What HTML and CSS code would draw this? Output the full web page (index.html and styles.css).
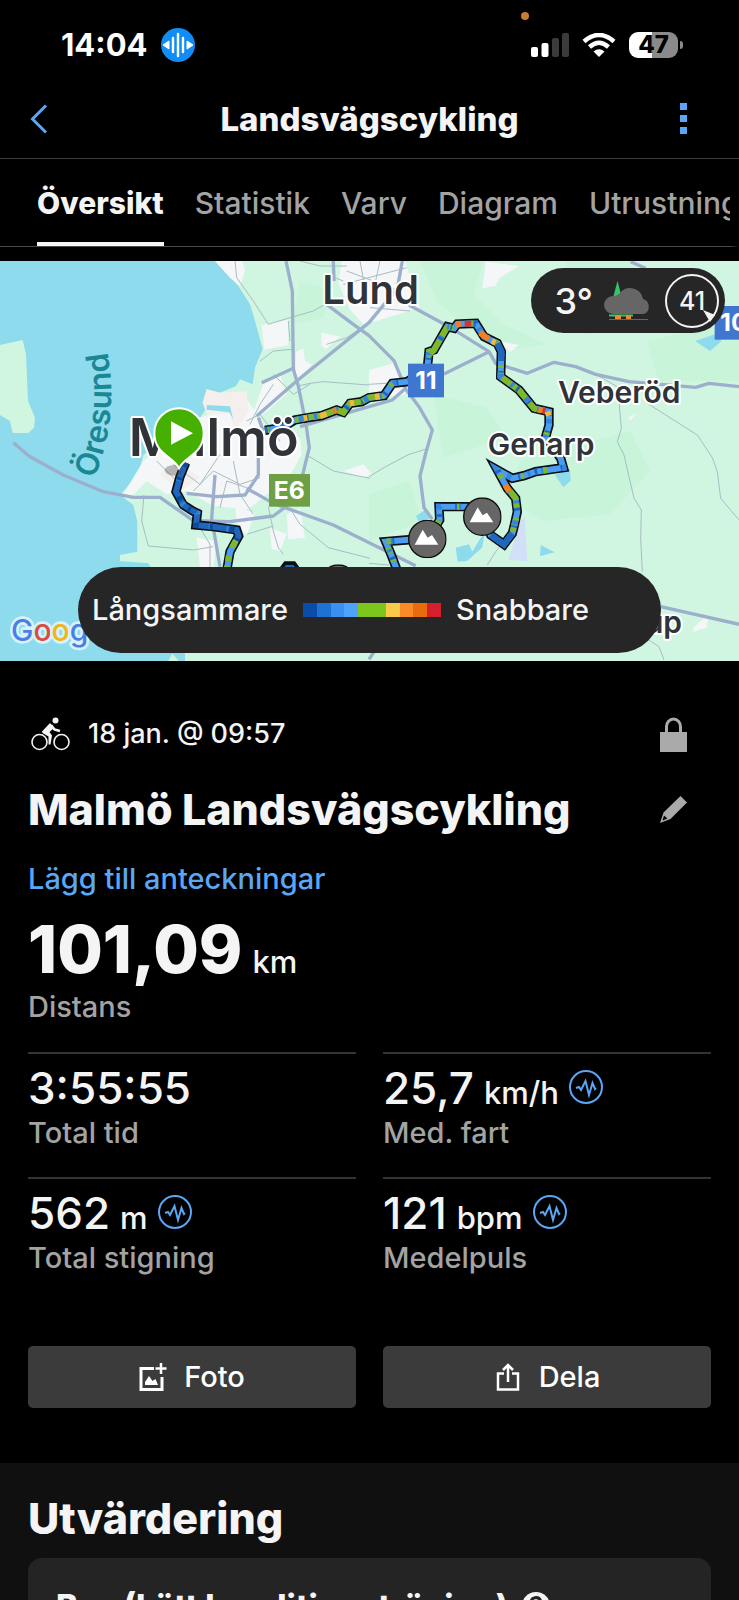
FILE: index.html
```html
<!DOCTYPE html>
<html lang="sv">
<head>
<meta charset="utf-8">
<meta name="viewport" content="width=device-width, initial-scale=1">
<title>Landsvägscykling</title>
<link rel="stylesheet" href="styles.css">
</head>
<body>
<svg class="defs" width="0" height="0" aria-hidden="true">
  <symbol id="pulse" viewBox="0 0 34 34">
    <circle cx="17" cy="17" r="16" fill="none" stroke="currentColor" stroke-width="2"/>
    <path d="M7 18l3-1 2 3 4.500-9 3.500 14 3.500-12 2.500 6 1-1" fill="none" stroke="currentColor" stroke-width="2"/>
  </symbol>
  <symbol id="peak" viewBox="0 0 116 116">
    <circle cx="58" cy="58" r="56" fill="#666" stroke="#0c0c0c" stroke-width="4"/>
    <path d="M20 75L44 30l15 24 13-8 19 29z" fill="#fff"/>
  </symbol>
</svg>
<div class="app">
  <header class="status">
    <span class="mic-dot"></span>
    <div class="status-side">
      <span class="clock">14:04</span>
      <svg class="voice" viewBox="0 0 34 34" aria-hidden="true">
        <circle cx="17" cy="17" r="17" fill="#128cf5"/>
        <path d="M2 17l6-4v8zM32 17l-6-4v8z" fill="#fff" stroke="#fff" stroke-linejoin="round"/>
        <path d="M12 10v14M17 6v22M22 10v14" stroke="#fff" stroke-width="2.400" stroke-linecap="round"/>
      </svg>
    </div>
    <div class="status-side">
      <svg class="signal" viewBox="0 0 38 24" aria-hidden="true">
        <rect x="0" y="14" width="7" height="10" rx="2" fill="#fff"/><rect x="10.500" y="10" width="7" height="14" rx="2" fill="#fff"/>
        <rect x="21" y="5" width="7" height="19" rx="2" fill="#3b3b3b"/><rect x="31" y="0" width="7" height="24" rx="2" fill="#3b3b3b"/>
      </svg>
      <svg class="wifi" viewBox="0 0 34 24" aria-hidden="true">
        <path d="M2 8.500Q17-4.500 32 8.500M7.500 14Q17 5.500 26.500 14" fill="none" stroke="#fff" stroke-width="4.500"/>
        <path d="M11.500 18.500Q17 14 22.500 18.500L17 24z" fill="#fff"/>
      </svg>
      <div class="battery">47</div>
    </div>
  </header>

  <nav class="titlebar">
    <button class="icon-btn" aria-label="Tillbaka">
      <svg class="back" viewBox="0 0 18 30"><path d="M16 1.500L2.500 15 16 28.500" fill="none" stroke="currentColor" stroke-width="3"/></svg>
    </button>
    <h1>Landsvägscykling</h1>
    <button class="icon-btn more" aria-label="Mer">
      <svg class="dots" viewBox="0 0 7 31"><path d="M0 0h7v7H0zM0 12h7v7H0zM0 24h7v7H0z" fill="currentColor"/></svg>
    </button>
  </nav>

  <nav class="tabs">
    <a class="active" href="#oversikt">Översikt</a>
    <a href="#statistik">Statistik</a>
    <a href="#varv">Varv</a>
    <a href="#diagram">Diagram</a>
    <a href="#utrustning">Utrustning</a>
  </nav>

  <section class="map" aria-label="Karta">
    <svg class="map-canvas" viewBox="0 0 2217 1200" preserveAspectRatio="xMidYMid slice">
      <defs>
        <path id="sound" d="M283 654Q362 460 318 250"/>
        <path id="south" d="M557 605L540 647 528 692 550 732 578 750 592 757 588 792 640 797 710 807 716 825 690 872 680 930"/>
        <path id="north" d="M795 508L845 500 885 477 930 469 965 464 1010 447 1030 454 1050 427 1085 422 1107 410 1152 404 1177 367 1222 362 1282 320 1287 272 1302 267 1342 197 1362 202 1372 189 1427 187 1452 227 1492 247 1504 272 1502 347 1557 387 1602 442 1647 452 1647 492 1637 527 1682 592 1690 620 1607 632 1572 644 1537 652 1492 627 1522 682 1547 712 1552 752 1542 797 1537 817 1512 850 1472 822 1447 767 1402 737 1317 737 1319 777 1284 832 1217 837 1157 842 1172 877 1192 930"/>
      </defs>
      <rect width="2217" height="1200" fill="#d0f6e1"/>
      <g fill="#c8f4da">
        <path d="M1260 0h190l-30 100 90 90 130 60-150 20-180-150zM1700 0h200l60 180-200 40-90-120zM1940 240l277-60v180l-240 0zM1560 600l330-90 60 120-120 130-200 20-100-60zM1107 700l120-40 40 120-160 60zM900 60l100 30-30 80-90 20zM1300 400l160 40 60 90-190 60z"/>
      </g>
      <path fill="#8fdbee" d="M0 0H645L715 75 750 130 765 180 788 265 765 320 758 370 720 355 708 375 660 395 620 385 608 425 620 440 600 470 460 560 430 582 415 640 360 702 400 732 412 782V872L360 882V900L445 907 500 1000 555 1177V1200H0z"/>
      <path fill="#d0f6df" d="M0 252L68 237 78 280 84 420 105 470 102 500 85 516H38L30 480 0 462zM505 1200l12-22 20 22z"/>
      <g fill="#f4f6f8">
        <path d="M645 0h82l8 30-15 45-30-25zM785 192l80-16v76l-72 14zM888 272l22-10 5 38 20 10-50 55zM965 215l55 12-42 38-14-12zM1025 0h190l45 140-130 40-40 10-40-44-35-80zM1457 2l100 13-57 35-15 25-38 7zM1497 240l60 12-27 22zM1107 327l75-20 35 93-110 14zM790 370l50-30 20 60-70 60-40 20z"/>
        <path d="M600 470L745 420 790 490 900 530 905 580 850 680 800 700 745 745 640 735 560 690 500 700 440 660 400 702 370 700 430 600zM705 735l60 20-25 70-30-40zM810 800l50 20-20 50-25-5zM860 760l40-20 15 90-50 5zM590 830l60 10-10 80h-40zM1030 630l60-20 27 30-30 10zM1885 470l25-15-20 25zM2080 1100l45-40-5 40-40 12z"/>
      </g>
      <path fill="#f4eeec" d="M620 385l40 10 80-5 5 60-40 60-15-50-70 0-12-35zM480 640l60-30 60 40-60 40z"/>
      <path fill="#8fdbee" d="M620 432l70 4 10 40-12-22-68-8zM1665 642l45-18 2 35-22 20zM1248 765l30-20 10 28-30 12zM1367 860l40-10 10 22 25-42 12-10-8 40-45 40-28 2zM1622 852l42 22-44 12zM2085 240l60-20 20 20-35 30z"/>
      <path fill="#d3def7" d="M1560 780l14-12 8 132-57-4z"/>
      <g class="minor">
        <path d="M705 0l5 50 50 70 45 70 65-20 70-20 35-20M780 300l40-30 55-5M432 702l-7 78 20 75 135 12 60-10M805 737l15 73 15 50 15 20M870 742l30 48 85 70 125 32M920 582l80 48 110 22M895 375l35-8 40-5 137 10M1857 422l7 80-12 40 20 40 30 130 22 35-2 85 5 100M1942 427l150 95 45 68 15 42 10 80 55 65M1787 340l70 40v42M1947 1137l30 20 15 40M1107 647l50-30 70-37 50-15M1462 912l25-40 40-50"/>
        <path d="M865 180l5 60M980 250l60-20 60-40M750 490l30-60 40-60M820 340l60 60 50-30M520 610l80 60 60-90M580 690l60-60 80 40 60-20M700 600l20 100 40 60M660 740l20-80 60 20M600 740v60l30 50v80M740 480l40-20 60 80M470 600l60 60M1040 30l160 60M1080 0l20 110M1140 0l-20 90M1030 70l190-50M1110 140l120 10M900 0l60 15 80 0M980 40l50 20M740 820l80-25M1107 907l60 5M1107 370l80-5"/>
      </g>
      <g class="major">
        <path d="M858 0l19 90 3 235 15 50 23 115 10 70-10 40-18 75-40 60-40 30-130 17-110-3-100-70h-80l-90-17-120-50-100-55-50-42"/>
        <path d="M770 465l120-105 217-175 85-103 15-82M785 365l95-43M980 130l80 60 47 34 75 75 35 85 40 53 40 70-20 70-17 68 12 95 25 35M1227 132l120 65 120 75 20 35 95 30 80-33 65 13 60 23 100 22 200 17 40-12 90 10M1332 339l135-67M740 682l80 45 180 65 247 122M1700 970l282 67 235 53M560 697l90 10 85-5 40-60v-60M645 642l-10 130 25 145M775 470l15 40M1892 2l45 20M1000 0l2 60M1217 382l-40 35-70 20-207 60M1107 1195l20-30"/>
      </g>

      <g class="route">
        <g class="casing">
          <use href="#south"/><use href="#north"/>
          <path d="M845 935l15-20h18l15 20"/>
        </g>
        <use href="#south" class="c1"/><use href="#south" class="c2 dash-a"/><use href="#south" class="c0 dash-b"/>
        <path class="c3" d="M706 842L690 872 680 930"/>
        <path class="c4" d="M708 838l-12 22M686 885l-2 15M682 914l-2 16"/>
        <use href="#north" class="c3"/>
        <path class="c4" d="M885 477L930 469 965 464 1010 447 1030 454 1050 427 1085 422 1107 410 1152 404M1284 285L1302 267 1342 197M1502 330V347L1557 387 1602 442 1625 448M1530 690L1547 712 1550 740M1549 770L1542 797M1164 860l8 17"/>
        <use href="#north" class="c2 dash-b"/><use href="#north" class="c4 dash-c"/><use href="#north" class="c1 dash-a"/>
        <path class="c1" d="M1492 247L1504 272V300M1537 817L1512 850 1472 822"/>
        <path class="c5" d="M912 472l10-2M960 465l20-6M1050 427l12-2M1125 408l14-2M1475 240l12 5M1642 452l5 12"/>
        <path class="c6" d="M1368 192l15-4M1440 215l15 12 12 6M1615 445l18 4M1516 672l12 20M1000 450l10-3"/>
        <path class="c7" d="M1394 188h20M1628 447l8 2"/>
        <path class="c1" d="M850 935l12-14h14l10 14"/>
      </g>
      <use href="#peak" x="1224" y="776" width="116" height="116"/>
      <use href="#peak" x="1389" y="709" width="116" height="116"/>
      <use href="#peak" x="957" y="910" width="116" height="116"/>

      <text class="sea"><textPath href="#sound">Öresund</textPath></text>
      <g class="place">
        <text class="town" x="967" y="130">Lund</text>
        <text class="city" x="386" y="585">Malmö</text>
        <text x="1674" y="427">Veberöd</text>
        <text x="1463" y="581">Genarp</text>
        <text x="2046" y="1115" text-anchor="end">Skurup</text>
      </g>
      <g class="shield">
        <rect x="1224" y="308" width="108" height="101" fill="#3f76cf"/><text x="1278" y="384">11</text>
        <rect x="2144" y="135" width="108" height="101" fill="#3f76cf"/><text x="2202" y="211">10</text>
        <rect x="807" y="639" width="123" height="98" fill="#6f9f45"/><text x="868" y="713">E6</text>
      </g>
      <ellipse cx="522" cy="628" rx="28" ry="16" fill="#444" opacity=".35"/>
      <path d="M537 622C520 585 463 580 463 516a74 74 0 0 1 148 0C611 580 554 585 537 622z" fill="#46b000" stroke="#fff" stroke-width="6"/>
      <path d="M513 481l66 36-66 34z" fill="#fff"/>
      <text class="google" x="33" y="1139"><tspan fill="#4a7fe8">G</tspan><tspan fill="#dd4b42">o</tspan><tspan fill="#f0b51c">o</tspan><tspan fill="#4a7fe8">g</tspan></text>
    </svg>

    <div class="weather">
      <span>3°</span>
      <svg class="cloud" viewBox="0 0 50 40" aria-hidden="true">
        <path d="M13.500 0l4 15h-8z" fill="#35c46a"/>
        <path d="M9 33a9 9 0 0 1 0-18c3 0 5-1 7-3a13 13 0 0 1 23 6 8 8 0 0 1 1 15z" fill="#666"/>
        <path d="M5 38.500h39" stroke="#666"/><path d="M5 34.500h24" stroke="#35c46a" stroke-width="2"/>
        <path d="M11 34h6v4h-6zM22 34h5v4h-5z" fill="#ed8b2d"/>
      </svg>
      <span class="wind">41
        <svg viewBox="0 0 54 54" aria-hidden="true"><circle cx="27" cy="27" r="26" fill="none" stroke="#f4f4f4" stroke-width="2"/><path d="M38 36l12 5-5 7z" fill="#f4f4f4"/></svg>
      </span>
    </div>

    <div class="legend">
      <span>Långsammare</span>
      <div class="scale"><i></i><i></i><i></i><i></i><i></i><i></i><i></i><i></i><i></i><i></i></div>
      <span>Snabbare</span>
    </div>
  </section>

  <main class="summary">
    <div class="row date">
      <svg class="bike" viewBox="0 0 39 34" aria-hidden="true">
        <g fill="none" stroke="#f4f4f4" stroke-width="1.600"><circle cx="8.500" cy="25" r="7.500"/><circle cx="30.500" cy="25" r="7.500"/></g>
        <circle cx="24.500" cy="3.500" r="3" fill="#f4f4f4"/>
        <path d="M20 8l3.500 4.500L29 14" fill="none" stroke="#f4f4f4" stroke-width="2.600" stroke-linejoin="round"/>
        <path d="M11 14.500L19 6l4 5-4.500 4 2.500 3.500-1.500 9h-2l0-8-6-3.500z" fill="#f4f4f4"/>
      </svg>
      <time>18 jan. @ 09:57</time>
      <button class="icon-btn end" aria-label="Integritet">
        <svg class="lock" viewBox="0 0 27 35"><path d="M0 15h27v20H0z" fill="currentColor"/><path d="M6.500 16V9.500a7 7.500 0 0 1 14 0V16" fill="none" stroke="currentColor" stroke-width="3"/></svg>
      </button>
    </div>
    <div class="row">
      <h2>Malmö Landsvägscykling</h2>
      <button class="icon-btn end" aria-label="Redigera">
        <svg class="pencil" viewBox="0 0 27 27"><path fill="currentColor" fill-rule="evenodd" d="M20.500 0L27 6.500 10.500 23 0 27l3.500-10.500zM4 19.500l-1.500 5 5-2z"/></svg>
      </button>
    </div>
    <a class="notes" href="#anteckningar">Lägg till anteckningar</a>
    <div class="distance">
      <div class="value"><strong>101,09</strong> <span>km</span></div>
      <div class="label">Distans</div>
    </div>
    <div class="stats">
      <div class="stat"><div class="value"><b>3:55:55</b></div><div class="label">Total tid</div></div>
      <div class="stat"><div class="value"><b>25,7</b> <span>km/h</span><svg><use href="#pulse"/></svg></div><div class="label">Med. fart</div></div>
      <div class="stat"><div class="value"><b>562</b> <span>m</span><svg><use href="#pulse"/></svg></div><div class="label">Total stigning</div></div>
      <div class="stat"><div class="value"><b>121</b> <span>bpm</span><svg><use href="#pulse"/></svg></div><div class="label">Medelpuls</div></div>
    </div>
    <div class="actions">
      <button>
        <svg viewBox="0 0 28 28" aria-hidden="true"><path d="M15 5.500H2v21h21V14" fill="none" stroke="currentColor" stroke-width="3"/><path d="M22 0v11M16.500 5.500h11" stroke="currentColor" stroke-width="2.500"/><path d="M6 22v-3l4-6 3.500 5 3-2 2.500 6z" fill="currentColor"/></svg>
        Foto
      </button>
      <button>
        <svg viewBox="0 0 28 28" aria-hidden="true"><path d="M10 10.500H4v16h20v-16h-6M14 19V3M9 7l5-5 5 5" fill="none" stroke="currentColor" stroke-width="2.500"/></svg>
        Dela
      </button>
    </div>
  </main>

  <section class="evaluation">
    <h2>Utvärdering</h2>
    <div class="card">
      <span>Bas (Lätt konditionsträning)</span>
      <svg viewBox="0 0 28 28" aria-hidden="true"><circle cx="14" cy="14" r="14" fill="#f4f4f4"/><path d="M9 11a5 5 0 1 1 7.500 4Q14 16.500 14 19M14 21v3" fill="none" stroke="#242424" stroke-width="3"/></svg>
    </div>
  </section>
</div>
</body>
</html>
```
FILE: styles.css
```css
* { box-sizing: border-box; }
body {
  margin: 0;
  background: #000;
  color: #f4f4f4;
  font: 500 29px/36px Inter, "Liberation Sans", sans-serif;
}
h1, h2 { margin: 0; font-weight: 800; }
a { text-decoration: none; }
button { font: inherit; color: inherit; border: 0; cursor: pointer; }
svg { display: block; flex: none; }
.defs { position: absolute; }
.app { height: 100vh; overflow: hidden; display: flex; flex-direction: column; }
.app > * { flex: none; }
.app > .evaluation { flex: 1 0 auto; }

.status {
  position: relative;
  display: flex; justify-content: space-between; align-items: center;
  height: 90px; padding: 0 55px 0 61px;
}
.mic-dot {
  position: absolute; top: 12px; right: 210px;
  width: 8px; height: 8px; border-radius: 50%; background: #c97a35;
}
.status-side { display: flex; align-items: center; gap: 13px; }
.clock { font-size: 31px; font-weight: 700; color: #fff; }
.voice { width: 34px; height: 34px; }
.signal { width: 38px; height: 24px; }
.wifi { width: 34px; height: 24px; }
.battery {
  position: relative; width: 49px; height: 26px; border-radius: 9px; margin-right: 6px;
  background: linear-gradient(90deg, #fff 47%, #8a8a8a 47%);
  color: #000; font-size: 24px; font-weight: 800; line-height: 26px; text-align: center;
}
.battery::after {
  content: ""; position: absolute; left: 51px; top: 9px;
  width: 3px; height: 8px; border-radius: 0 4px 4px 0; background: #8a8a8a;
}

.titlebar {
  display: grid; grid-template-columns: 80px 1fr 80px; align-items: center;
  height: 69px; padding-bottom: 11px; border-bottom: 1px solid #3b3b3b;
}
.titlebar h1 { font-size: 33px; text-align: center; }
.icon-btn { display: block; padding: 0; background: none; color: #5aa7f5; }
.titlebar .icon-btn { padding-left: 30px; }
.titlebar .more { padding-left: 21px; }
.back { width: 18px; height: 30px; }
.dots { width: 7px; height: 31px; }

.tabs {
  display: flex; gap: 31px; height: 88px; margin: 0 0 14px;
  padding-left: 37px; border-bottom: 1px solid #4a4a4a;
  overflow: hidden; border-right: 9px solid #000; font-size: 30px;
}
.tabs a { flex: none; color: #a3a3a3; padding-top: 26px; height: 87px; }
.tabs .active { color: #f4f4f4; font-weight: 800; border-bottom: 4px solid #f4f4f4; }

.map { position: relative; height: 400px; overflow: hidden; }
.map-canvas { width: 100%; height: 100%; }
.minor { fill: none; stroke: #a8bcc4; stroke-width: 3; }
.major { fill: none; stroke: #9cafcc; stroke-width: 10; stroke-linejoin: round; }
.route { fill: none; stroke-width: 18; }
.casing { stroke: #0a0f14; stroke-width: 28; }
.c0 { stroke: #0d4a9c; }
.c1 { stroke: #1f66bd; }
.c2 { stroke: #3187e0; }
.c3 { stroke: #4a9df0; }
.c4 { stroke: #7fb82a; }
.c5 { stroke: #f0b840; }
.c6 { stroke: #f08020; }
.c7 { stroke: #d8352a; }
.dash-a { stroke-dasharray: 8 46 5 71; }
.dash-b { stroke-dasharray: 14 33 9 52; }
.dash-c { stroke-dasharray: 12 60 8 95; }
.place { font-size: 90px; font-weight: 600; fill: #303338; stroke: #fff; stroke-width: 12; paint-order: stroke; stroke-linejoin: round; }
.town { font-size: 120px; }
.city { font-size: 156px; }
.sea { font-size: 94px; font-weight: 600; fill: #1b8793; }
.shield { font-size: 74px; font-weight: 700; fill: #fff; text-anchor: middle; }
.google { font-size: 90px; stroke: #d8f2fa; stroke-width: 16; paint-order: stroke; stroke-linejoin: round; }

.weather {
  position: absolute; top: 7px; right: 14px; height: 65px; padding: 0 6px 0 23px;
  display: flex; align-items: center; gap: 11px;
  border-radius: 33px; background: #262626; font-size: 36px;
}
.cloud { width: 50px; height: 40px; }
.wind { position: relative; width: 54px; height: 54px; font-size: 25px; line-height: 54px; text-align: center; }
.wind svg { position: absolute; inset: 0; }
.legend {
  position: absolute; left: 78px; right: 78px; bottom: 8px; height: 86px; padding-left: 14px;
  display: flex; align-items: center; gap: 15px;
  border-radius: 43px; background: #262626;
}
.scale { display: flex; width: 138px; height: 14px; }
.scale i { flex: 1; background: #7cc61e; }
.scale i:nth-child(1) { background: #0a4da6; }
.scale i:nth-child(2) { background: #1d72d4; }
.scale i:nth-child(3) { background: #3891f0; }
.scale i:nth-child(4) { background: #4ea3fc; }
.scale i:nth-child(7) { background: #fbc94b; }
.scale i:nth-child(8) { background: #fa8b26; }
.scale i:nth-child(9) { background: #ea6a0e; }
.scale i:nth-child(10) { background: #d3202c; }

.summary { padding: 55px 28px; }
.row { display: flex; align-items: center; }
.date { gap: 18px; height: 36px; padding-left: 3px; font-size: 27px; }
.bike { width: 39px; height: 34px; }
.end { margin-left: auto; margin-right: 24px; color: #aaa; }
.lock { width: 27px; height: 35px; }
.pencil { width: 27px; height: 27px; }
h2 { font-size: 43px; line-height: 52px; }
.date + .row { margin-top: 31px; }
.notes { display: block; margin-top: 26px; color: #5aa7f5; }
.value { display: flex; align-items: baseline; gap: 10px; height: 46px; font-size: 31px; line-height: 44px; }
.distance { margin-top: 14px; }
.distance .value { height: 78px; }
.distance strong { font-size: 66px; font-weight: 800; line-height: 76px; }
.label { color: #a3a3a3; }
.stats { display: grid; grid-template-columns: 1fr 1fr; column-gap: 27px; margin-top: 27px; }
.stat { border-top: 2px solid #333; height: 125px; padding-top: 12px; }
.stat b { font-size: 44px; font-weight: 500; }
.stat .label { margin-top: 3px; }
.stat svg { width: 34px; height: 34px; margin-bottom: 4px; color: #5aa7f5; align-self: center; }
.actions { display: grid; grid-template-columns: 1fr 1fr; gap: 27px; margin-top: 44px; }
.actions button {
  display: flex; align-items: center; justify-content: center; gap: 17px;
  height: 62px; padding: 0; border-radius: 5px; background: #3b3b3b; color: #fff;
}
.actions svg { width: 28px; height: 28px; }

.evaluation { padding: 29px 28px 0; background: #101010; }
.card {
  display: flex; align-items: center; gap: 14px; margin-top: 14px; padding: 30px 28px;
  border-radius: 14px; background: #242424; font-size: 33px; font-weight: 800;
}
.card svg { width: 28px; height: 28px; }
```
